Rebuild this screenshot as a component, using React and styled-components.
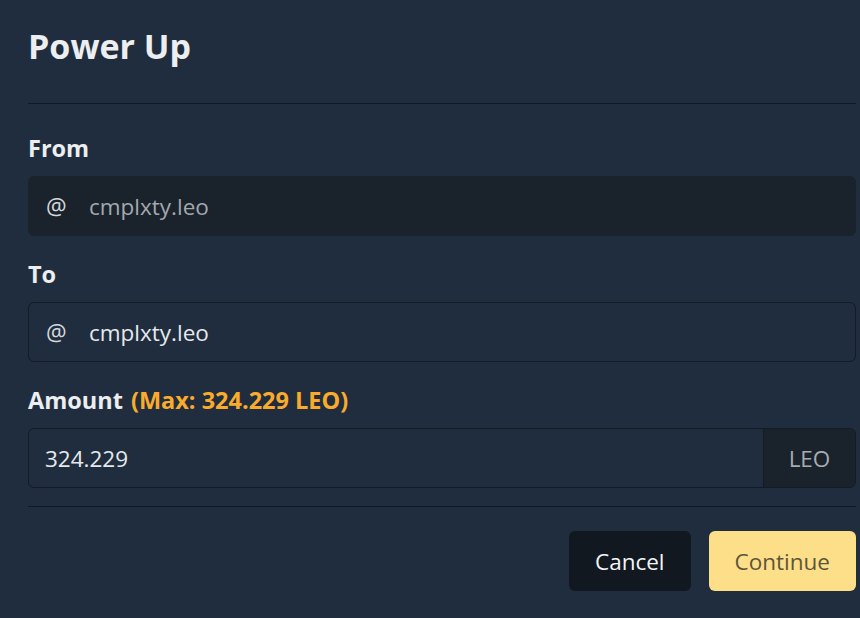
import React from "react";
import styled, { createGlobalStyle } from "styled-components";

const Global = createGlobalStyle`
  html, body { margin: 0; padding: 0; background: #1f2d3e; }
  body { font-family: "Open Sans", "Noto Sans", sans-serif; color: #eef0f2; }
  * { box-sizing: border-box; }
`;

const Modal = styled.div`
  width: 860px;
  height: 618px;
  padding: 0 4px 0 28px;
  display: flex;
  flex-direction: column;
  background: #1f2d3e;
  overflow: hidden;
`;

const Header = styled.div`
  height: 104px;
  display: flex;
  align-items: flex-start;
  padding-top: 25px;
  border-bottom: 1px solid #111a24;
`;

const Title = styled.h3`
  margin: 0;
  font-size: 34px;
  line-height: 42px;
  font-weight: 700;
  color: #eceef0;
`;

const Body = styled.div`
  display: flex;
  flex-direction: column;
  padding-top: 28px;
  padding-bottom: 18px;
  gap: 22px;
  border-bottom: 1px solid #111a24;
`;

const Field = styled.div`
  display: flex;
  flex-direction: column;
  gap: 12px;
`;

const Label = styled.label`
  font-size: 23.5px;
  line-height: 32px;
  font-weight: 700;
  color: #eceef0;
`;

const Max = styled.span`
  color: #fbab2b;
  margin-left: 8px;
`;

const Group = styled.div`
  display: flex;
  height: 60px;
  border-radius: 6px;
  border: 1px solid ${(p) => (p.$disabled ? "#1a222c" : "#131b24")};
  background: ${(p) => (p.$disabled ? "#1a222c" : "#1f2d3e")};
  overflow: hidden;
`;

const Prefix = styled.span`
  display: flex;
  align-items: center;
  padding: 0 0 0 17px;
  width: 60px;
  font-size: 23px;
  color: #d4d8dc;
`;

const Value = styled.span`
  flex: 1;
  display: flex;
  align-items: center;
  padding-left: ${(p) => (p.$pad ? "16px" : "0")};
  font-size: 22.5px;
  color: ${(p) => (p.$muted ? "#a3a8ae" : "#e6e9ec")};
`;

const Suffix = styled.span`
  display: flex;
  align-items: center;
  justify-content: center;
  width: 92px;
  border-left: 1px solid #131b24;
  background: #1a222c;
  font-size: 22.5px;
  color: #a7acb2;
`;

const Footer = styled.div`
  display: flex;
  justify-content: flex-end;
  gap: 18px;
  padding-top: 24px;
`;

const Button = styled.button`
  height: 60px;
  padding: 0 26px;
  border: none;
  border-radius: 6px;
  font-family: inherit;
  font-size: 22.5px;
  background: ${(p) => (p.$primary ? "#fedf89" : "#111820")};
  color: ${(p) => (p.$primary ? "#5c5638" : "#f4f5f6")};
`;

export default function App() {
  return (
    <>
      <Global />
      <Modal>
        <Header>
          <Title>Power Up</Title>
        </Header>
        <Body>
          <Field>
            <Label>From</Label>
            <Group $disabled>
              <Prefix>@</Prefix>
              <Value $muted>cmplxty.leo</Value>
            </Group>
          </Field>
          <Field>
            <Label>To</Label>
            <Group>
              <Prefix>@</Prefix>
              <Value>cmplxty.leo</Value>
            </Group>
          </Field>
          <Field>
            <Label>
              Amount<Max>(Max: 324.229 LEO)</Max>
            </Label>
            <Group>
              <Value $pad>324.229</Value>
              <Suffix>LEO</Suffix>
            </Group>
          </Field>
        </Body>
        <Footer>
          <Button>Cancel</Button>
          <Button $primary>Continue</Button>
        </Footer>
      </Modal>
    </>
  );
}
